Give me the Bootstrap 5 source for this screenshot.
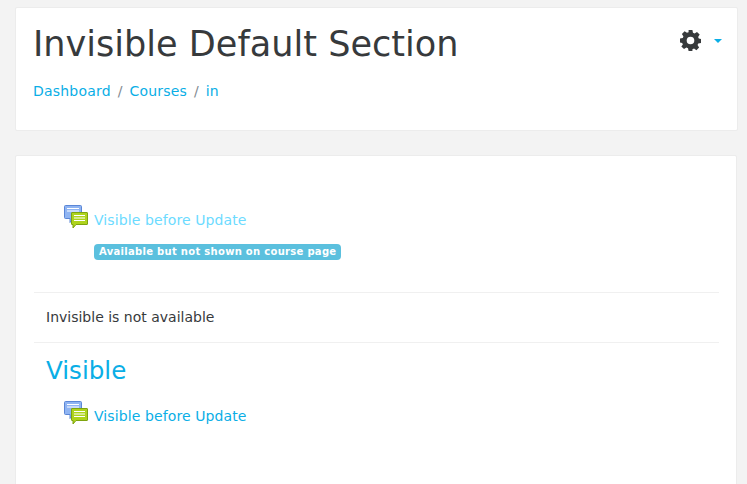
<!DOCTYPE html>
<html lang="en">
<head>
  <meta charset="UTF-8" />
  <meta name="viewport" content="width=device-width, initial-scale=1.0"/>
  <title>Invisible Default Section</title>
  <link rel="stylesheet" href="https://cdn.jsdelivr.net/npm/bootstrap@5.3.0/dist/css/bootstrap.min.css"/>
  <style>
    html, body { height: 484px; overflow: hidden; }
    body { background: #f3f3f3; font-family: "DejaVu Sans", sans-serif; font-size: 14px; color: #373a3c; }
    a { color: #0aaee6; text-decoration: none; letter-spacing: .1px; }
    .page-wrap { padding: 7px 10px 0 15px; }
    .box { background: #fff; border: 1px solid #ececec; border-radius: 2px; }
    .head-box { height: 124px; padding: 12px 17px 0; margin: 0 -1px 24px 0; }
    .head-box h1 { font-size: 35.1px; font-weight: 400; line-height: 48px; margin: 0; color: #373a3c; }
    .crumbs { margin: 13px 0 0; padding: 0; list-style: none; line-height: 20px; }
    .crumbs a { letter-spacing: .2px; }
    .crumbs li + li::before { content: "/"; color: #818a91; padding: 0 7px; }
    .gear-menu { margin-top: 10px; margin-right: -2px; gap: 13px; }
    .caret-down { width: 0; height: 0; margin-top: 1px; border: 4.5px solid transparent; border-top-color: #0aaee6; border-bottom: 0; }
    .body-box { height: 400px; padding: 49px 17px 0 18px; }
    .activity-row { margin-left: 18px; gap: 6px; }
    .activity-row a { padding-top: 5px; line-height: 20px; }
    .section-one { padding: 0 12px 31px; }
    .dim-link { color: #6cdbff; }
    .note-pill { background: #5bc0de; color: #fff; font-size: 10px; font-weight: 700; letter-spacing: .3px; border-radius: 4px; padding: 0 5px 1px; line-height: 15px; margin: 14px 0 0 48px; }
    .notice { border-top: 1px solid #f0f0f0; border-bottom: 1px solid #f0f0f0; padding: 14px 12px 15px; line-height: 20px; }
    .section-two { padding: 0 12px; }
    .section-two h3 { font-size: 24.6px; font-weight: 400; line-height: 32px; margin: 12px 0 0; color: #0aaee6; }
    .section-two .activity-row { margin-top: 14px; }
  </style>
</head>
<body>

<div class="page-wrap">
  <!-- header -->
  <div class="box head-box d-flex justify-content-between align-items-start">
    <div>
      <h1>Invisible Default Section</h1>
      <ul class="crumbs d-flex">
        <li><a href="#">Dashboard</a></li>
        <li><a href="#">Courses</a></li>
        <li><a href="#">in</a></li>
      </ul>
    </div>
    <div class="gear-menu d-flex align-items-center">
      <svg width="21" height="21" viewBox="0 0 22 22"><path fill="#373a3c" fill-rule="evenodd" d="M9 0h4l.6 2.900 1.700.7 2.500-1.600 2.800 2.800-1.600 2.500.7 1.700 2.300.5v4l-2.900.6-.7 1.700 1.600 2.500-2.800 2.800-2.500-1.600-1.700.7L13 22H9l-.6-2.900-1.700-.7-2.500 1.600-2.800-2.800L3 15.300l-.7-1.700L0 13V9l2.900-.6.7-1.700L2 4.200 4.800 1.400l2.500 1.600 1.700-.7zM11 7a4 4 0 1 0 0 8 4 4 0 0 0 0-8z"/></svg>
      <span class="caret-down"></span>
    </div>
  </div>

  <!-- content -->
  <div class="box body-box">
    <div class="section-one">
      <div class="activity-row d-flex align-items-start">
        <svg width="24" height="24" viewBox="0 0 24 24"><path fill="#8fb4f2" stroke="#5b86d6" d="M1.500.5h15a1 1 0 0 1 1 1v11a1 1 0 0 1-1 1H9l-3 4v-4H1.500a1 1 0 0 1-1-1v-11a1 1 0 0 1 1-1z"/><path stroke="#fff" d="M3 3.500h12M3 6h12"/><path fill="#aed31c" stroke="#7ea40f" d="M8 7.500h15a.5.5 0 0 1 .5.500v11a.5.5 0 0 1-.5.500H12l-3 3.500v-3.500H8a.5.5 0 0 1-.5-.500V8a.5.5 0 0 1 .5-.500z"/><path stroke="#fff" d="M10 10.500h11M10 13h11M10 15.500h11"/></svg>
        <a class="dim-link" href="#">Visible before Update</a>
      </div>
      <span class="note-pill d-inline-block">Available but not shown on course page</span>
    </div>
    <div class="notice">Invisible is not available</div>
    <div class="section-two">
      <h3>Visible</h3>
      <div class="activity-row d-flex align-items-start">
        <svg width="24" height="24" viewBox="0 0 24 24"><path fill="#8fb4f2" stroke="#5b86d6" d="M1.500.5h15a1 1 0 0 1 1 1v11a1 1 0 0 1-1 1H9l-3 4v-4H1.500a1 1 0 0 1-1-1v-11a1 1 0 0 1 1-1z"/><path stroke="#fff" d="M3 3.500h12M3 6h12"/><path fill="#aed31c" stroke="#7ea40f" d="M8 7.500h15a.5.5 0 0 1 .5.500v11a.5.5 0 0 1-.5.500H12l-3 3.500v-3.500H8a.5.5 0 0 1-.5-.500V8a.5.5 0 0 1 .5-.500z"/><path stroke="#fff" d="M10 10.500h11M10 13h11M10 15.500h11"/></svg>
        <a href="#">Visible before Update</a>
      </div>
    </div>
  </div>
</div>

<script src="https://cdn.jsdelivr.net/npm/bootstrap@5.3.0/dist/js/bootstrap.bundle.min.js"></script>
</body>
</html>
